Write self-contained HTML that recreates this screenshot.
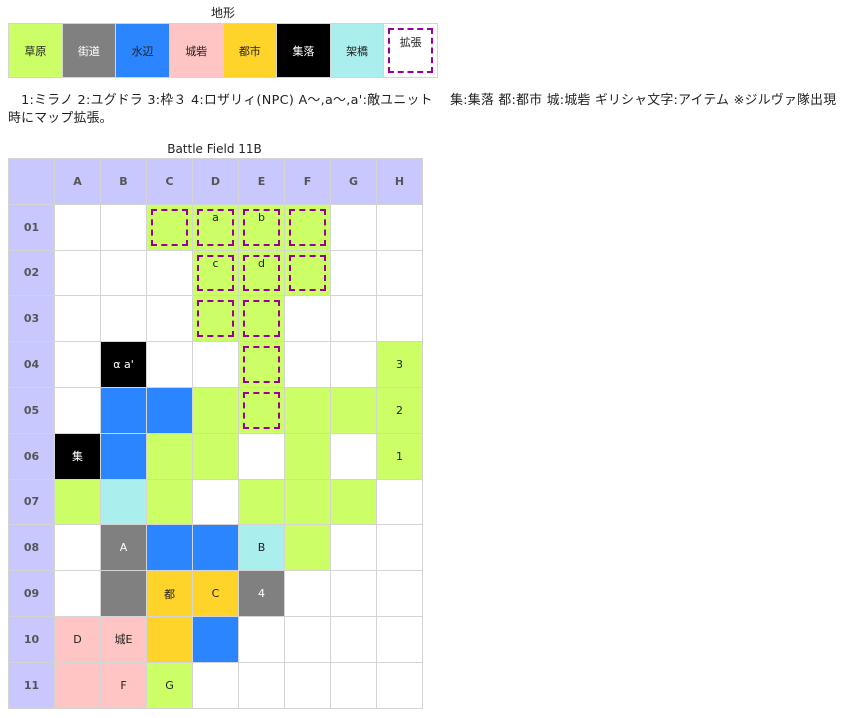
<!DOCTYPE html>
<html><head><meta charset="utf-8"><style>
body{margin:0;background:#fff;font-family:"DejaVu Sans","Noto Sans CJK JP",sans-serif;color:#222;}
.cap{position:absolute;font-size:12px;text-align:center}
table{border-collapse:collapse;position:absolute;table-layout:fixed}
td{border:1px solid #d4d4d4;text-align:center;font-size:11px;padding:0;position:relative;box-sizing:border-box}
#leg{left:8px;top:23px;width:430px}
#leg td{height:54px;width:53px}
#bf{left:8px;top:158px;width:413px}
#bf td{height:45.8px;width:46px}
#bf tr:first-child td,#bf td:first-child{background:#c8c8ff;color:#555;font-weight:bold}
.g{background:#ccff66}.k{background:#000;color:#fff}.b{background:#2b85ff}.p{background:#ffc4c4}
.y{background:#ffd42a}.c{background:#aaeeee}.s{background:#808080;color:#fff}
.d::after{content:"";position:absolute;left:4px;top:4px;right:4px;bottom:4px;border:2px dashed #990099}
.d span{position:absolute;left:0;right:0;top:6px}
</style></head><body>
<div class="cap" style="left:8px;top:4px;width:430px">地形</div>
<table id="leg"><tr>
<td class="g">草原</td><td class="s">街道</td><td class="b">水辺</td><td class="p">城砦</td><td class="y">都市</td><td class="k">集落</td><td class="c">架橋</td><td class="d"><span style="top:10px">拡張</span></td>
</tr></table>
<div style="position:absolute;left:8px;top:92px;width:838px;font-size:12.8px;line-height:18px;white-space:nowrap;letter-spacing:0.3px">&nbsp;&nbsp;&nbsp;1:ミラノ 2:ユグドラ 3:枠３ 4:ロザリィ(NPC) A〜,a〜,a':敵ユニット&nbsp;&nbsp;&nbsp;&nbsp;集:集落 都:都市 城:城砦 ギリシャ文字:アイテム ※ジルヴァ隊出現<br>時にマップ拡張。</div>
<div class="cap" style="left:8px;top:142px;width:413px">Battle Field 11B</div>
<table id="bf">
<tr><td></td><td>A</td><td>B</td><td>C</td><td>D</td><td>E</td><td>F</td><td>G</td><td>H</td></tr>
<tr><td>01</td><td></td><td></td><td class="g d"></td><td class="g d"><span>a</span></td><td class="g d"><span>b</span></td><td class="g d"></td><td></td><td></td></tr>
<tr><td>02</td><td></td><td></td><td></td><td class="g d"><span>c</span></td><td class="g d"><span>d</span></td><td class="g d"></td><td></td><td></td></tr>
<tr><td>03</td><td></td><td></td><td></td><td class="g d"></td><td class="g d"></td><td></td><td></td><td></td></tr>
<tr><td>04</td><td></td><td class="k">α a'</td><td></td><td></td><td class="g d"></td><td></td><td></td><td class="g">3</td></tr>
<tr><td>05</td><td></td><td class="b"></td><td class="b"></td><td class="g"></td><td class="g d"></td><td class="g"></td><td class="g"></td><td class="g">2</td></tr>
<tr><td>06</td><td class="k">集</td><td class="b"></td><td class="g"></td><td class="g"></td><td></td><td class="g"></td><td></td><td class="g">1</td></tr>
<tr><td>07</td><td class="g"></td><td class="c"></td><td class="g"></td><td></td><td class="g"></td><td class="g"></td><td class="g"></td><td></td></tr>
<tr><td>08</td><td></td><td class="s">A</td><td class="b"></td><td class="b"></td><td class="c">B</td><td class="g"></td><td></td><td></td></tr>
<tr><td>09</td><td></td><td class="s"></td><td class="y">都</td><td class="y">C</td><td class="s">4</td><td></td><td></td><td></td></tr>
<tr><td>10</td><td class="p">D</td><td class="p">城E</td><td class="y"></td><td class="b"></td><td></td><td></td><td></td><td></td></tr>
<tr><td>11</td><td class="p"></td><td class="p">F</td><td class="g">G</td><td></td><td></td><td></td><td></td><td></td></tr>
</table>
</body></html>
